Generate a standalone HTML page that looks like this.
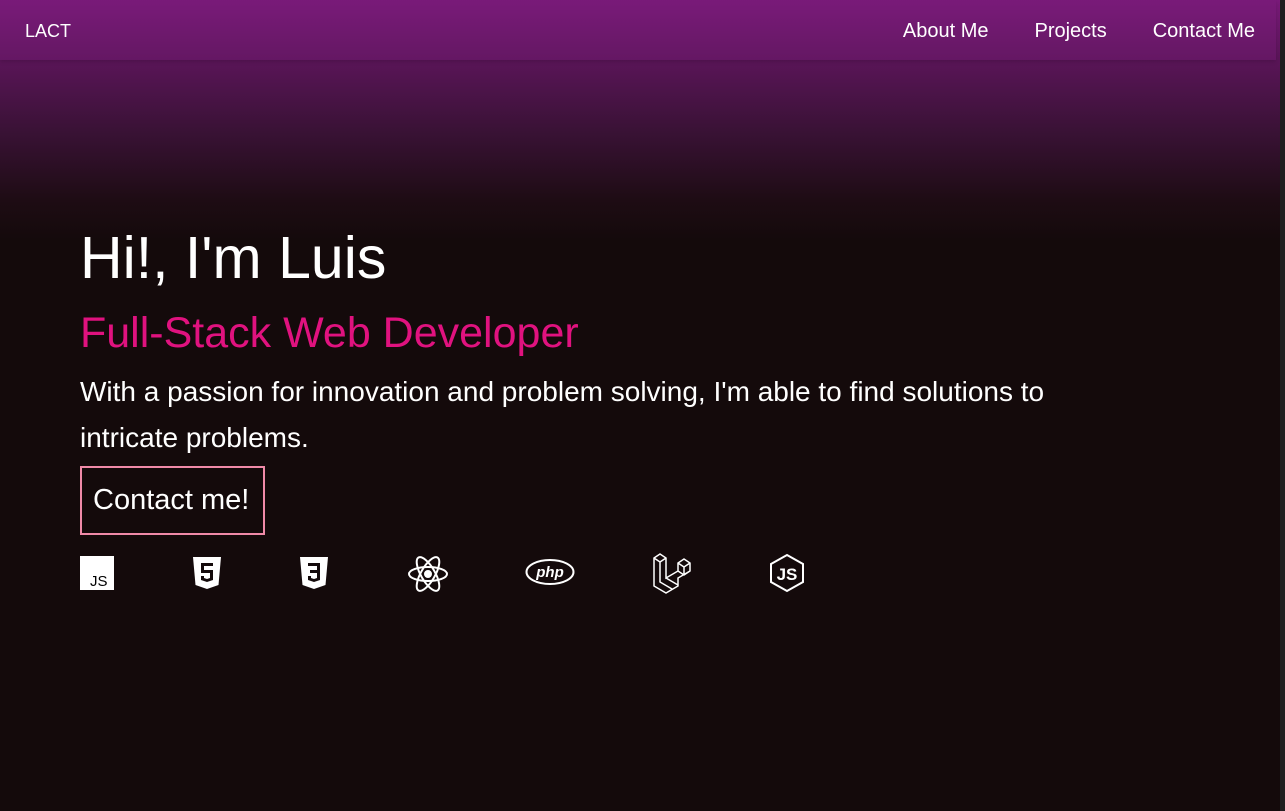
<!DOCTYPE html>
<html><head><style>
*{margin:0;padding:0;box-sizing:border-box}
body{width:1285px;height:811px;overflow:hidden;background:#140a0b;font-family:"Liberation Sans",sans-serif;color:#fff;position:relative}
.bg{position:absolute;left:0;top:0;width:1280px;height:811px;background:linear-gradient(#7a1a7a 0px,#5a1558 60px,#3a1236 130px,#1e0c14 200px,#140a0b 240px,#140a0b)}
.sb{position:absolute;right:0;top:0;width:5px;height:811px;background:#202020}
nav{position:absolute;left:0;top:0;width:1276px;height:60px;background:rgba(120,30,120,.35);box-shadow:0 2px 4px rgba(0,0,0,.15)}
nav .logo{position:absolute;left:25px;top:21px;font-size:18px}
nav .links{position:absolute;right:21px;top:20px;font-size:20px}
nav .links span{margin-left:46px}
h1{position:absolute;left:80px;top:224px;font-size:59px;font-weight:normal}
h2{position:absolute;left:80px;top:309px;font-size:43px;font-weight:normal;color:#e0127f}
p{position:absolute;left:80px;top:369px;width:1065px;font-size:28px;line-height:46px}
.btn{position:absolute;left:80px;top:466px;width:185px;height:69px;border:2px solid #f08aa8;font-size:29px;padding:16px 0 0 11px}
.icons svg{position:absolute;top:555px}
</style></head><body>
<div class="bg"></div><div class="sb"></div>
<nav><div class="logo">LACT</div><div class="links"><span>About Me</span><span>Projects</span><span>Contact Me</span></div></nav>
<h1>Hi!, I'm Luis</h1>
<h2>Full-Stack Web Developer</h2>
<p>With a passion for innovation and problem solving, I'm able to find solutions to intricate problems.</p>
<div class="btn">Contact me!</div>
<div class="icons">
<svg style="left:80px;top:556px" width="34" height="34"><rect width="34" height="34" fill="#fff"/><text x="10" y="30" font-size="15" fill="#000" font-family="Liberation Sans">JS</text></svg>
<svg style="left:191px" width="32" height="36" viewBox="0 0 32 36"><path d="M2 2h28l-2.5 28L16 34 4.5 30z" fill="#fff"/><path d="M10 8h12v3h-9v4h9v10l-6 2-6-2v-4h3v2l3 1 3-1v-5h-9z" fill="#140a0b"/></svg>
<svg style="left:298px" width="32" height="36" viewBox="0 0 32 36"><path d="M2 2h28l-2.5 28L16 34 4.5 30z" fill="#fff"/><path d="M10 8h12v17l-6 2-6-2v-4h3v2l3 1 3-1v-5h-7v-3h7v-4h-9z" fill="#140a0b"/></svg>
<svg style="left:407px" width="42" height="38" viewBox="0 0 42 38" fill="none" stroke="#fff" stroke-width="2"><ellipse cx="21" cy="19" rx="19" ry="7"/><ellipse cx="21" cy="19" rx="19" ry="7" transform="rotate(60 21 19)"/><ellipse cx="21" cy="19" rx="19" ry="7" transform="rotate(-60 21 19)"/><circle cx="21" cy="19" r="3" fill="#fff"/></svg>
<svg style="left:525px;top:558px" width="50" height="28" viewBox="0 0 50 28"><ellipse cx="25" cy="14" rx="23.5" ry="12" fill="none" stroke="#fff" stroke-width="2"/><text x="25" y="19" text-anchor="middle" font-size="15" font-weight="bold" font-style="italic" fill="#fff" font-family="Liberation Sans">php</text></svg>
<svg style="left:652px;top:552px" width="40" height="42" viewBox="0 0 40 42" fill="none" stroke="#fff" stroke-width="1.5"><path d="M2 6l6-4 6 4v20l12-7V11l6-4 6 4v8l-12 7v8l-12 7-12-7z M2 6l6 4 6-4 M8 10v20l12 7 M14 26l12 7 M26 19l6 4 6-4 M26 11l6 4 6-4 M32 15v8"/></svg>
<svg style="left:768px;top:553px" width="38" height="40" viewBox="0 0 38 40" fill="none" stroke="#fff" stroke-width="2"><path d="M19 2l16 9v18l-16 9-16-9V11z"/><text x="19" y="27" text-anchor="middle" font-size="17" font-weight="bold" fill="#fff" stroke="none" font-family="Liberation Sans">JS</text></svg>
</div>
</body></html>
